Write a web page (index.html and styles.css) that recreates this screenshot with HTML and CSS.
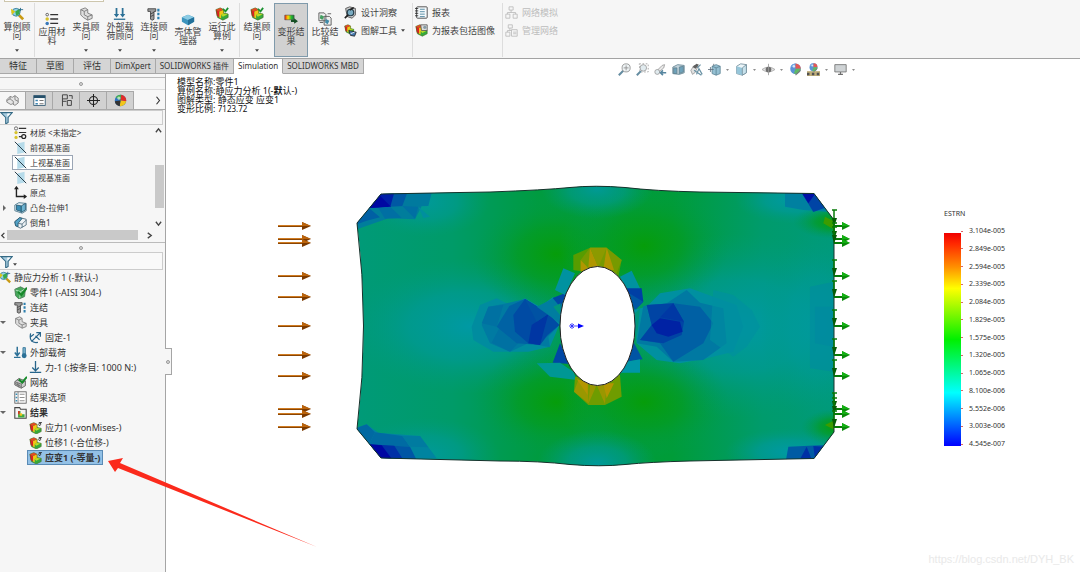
FILE: index.html
```html
<!DOCTYPE html>
<html lang="zh-CN">
<head>
<meta charset="utf-8">
<title>SOLIDWORKS Simulation</title>
<link rel="stylesheet" href="styles.css">
</head>
<body>
<svg class="defs" aria-hidden="true">
  <defs>
    <linearGradient id="rainbow" x1="0" x2="1" y1="0" y2="0"><stop offset="0" stop-color="#e21"/><stop offset=".35" stop-color="#fd0"/><stop offset=".7" stop-color="#2b3"/><stop offset="1" stop-color="#1a7a30"/></linearGradient>
    <symbol id="i-study" viewBox="0 0 16 16"><path d="M9 8l6 6" stroke="#c99a13" stroke-width="3"/><circle cx="7" cy="6" r="4.500" fill="#8fd0e8" stroke="#3a7e99"/><path d="M1 2l5 3-4 4z" fill="#d9c51a"/><path d="M6 5l5-3v6l-4 2z" fill="#37a949"/><path d="M12 1v4M10 3h5" stroke="#276a8c"/></symbol>
    <symbol id="i-list" viewBox="0 0 16 16"><circle cx="2.500" cy="3" r="1.500" fill="none" stroke="#555"/><circle cx="2.500" cy="8" r="2" fill="#d6c22c"/><circle cx="2.500" cy="13" r="2" fill="#3878b8"/><path d="M6 3h9M6 8h9M6 13h9" stroke="#333" stroke-width="1.500"/></symbol>
    <symbol id="i-fix" viewBox="0 0 16 16"><path d="M2 3l5-2 3 2v4l5 2v4l-5 2-5-3-3-3z" fill="#dedede" stroke="#777"/><path d="M2 3l4 2 4-2M6 5v4l4 2 5-2M10 11v4" fill="none" stroke="#777"/></symbol>
    <symbol id="i-load" viewBox="0 0 16 16"><path d="M4 1v8M11 1v8" stroke="#2c7096" stroke-width="2"/><path d="M1 8h6l-3 4zM8 8h6l-3 4z" fill="#2c7096"/><path d="M1 14h13" stroke="#2c7096" stroke-width="1.500"/></symbol>
    <symbol id="i-therm" viewBox="0 0 16 16"><path d="M4 1v10M1 8l3 4 3-4" fill="none" stroke="#2c7096" stroke-width="1.800"/><path d="M0 14h8" stroke="#2c7096" stroke-width="1.500"/><path d="M11 2h3v8h-3z" fill="#7fb4ce" stroke="#2c7096"/><circle cx="12.500" cy="12" r="3" fill="#2c7096"/></symbol>
    <symbol id="i-bolt" viewBox="0 0 16 16"><path d="M1 2h9v3H8v9l-2 1-2-1V5H1z" fill="#9c9c9c" stroke="#444"/><path d="M4 8l4-2M4 11l4-2" stroke="#444"/><path d="M13 2v12" stroke="#2c7fae" stroke-width="2.500" stroke-dasharray="3 1.500"/></symbol>
    <symbol id="i-shell" viewBox="0 0 16 16"><path d="M1 6l7-3 7 3v5l-7 4-7-4z" fill="#3c94bd"/><path d="M1 6l7-3 7 3-7 3z" fill="#8bcbe4"/><path d="M8 9v6l7-4V6z" fill="#23719a"/></symbol>
    <symbol id="i-res" viewBox="0 0 16 16"><path d="M1 3l5-2 4 2v4l5 1v4l-6 3-6-3z" fill="#36a93c"/><path d="M1 3l4 2v7l-3-2z" fill="#d22"/><path d="M5 5l5-2v4l-3 2v4l-2-1z" fill="#f6c414"/><path d="M7 9l3-2 5 1-6 3z" fill="#b7dc28"/><path d="M1 3l5-2 4 2v4l5 1v4l-6 3-6-3z" fill="none" stroke="#3f6b20" stroke-width=".7"/><path d="M6 1l4 2-5 2-4-2z" fill="#e54a22"/></symbol>
    <symbol id="i-run" viewBox="0 0 16 16"><use href="#i-res"/><path d="M9 2l3 3 3-4" fill="none" stroke="#1a9131" stroke-width="2"/></symbol>
    <symbol id="i-plot" viewBox="0 0 16 16"><use href="#i-res" y="1"/><path d="M12 2h4M13 2q-2 3 0 4 2-1 1-4" fill="none" stroke="#222"/></symbol>
    <symbol id="i-deform" viewBox="0 0 18 12"><path d="M1 1h12v6H1z" fill="url(#rainbow)" stroke="#444" stroke-width=".7"/><path d="M9 7h4V5l5 4-5 3v-2H9z" fill="#174f25"/></symbol>
    <symbol id="i-compare" viewBox="0 0 16 16"><path d="M1 1h6l2 2v7H1zM7 5h6l2 2v8H7z" fill="#eee" stroke="#555"/><path d="M3 3l4 2-2 4-3-2z" fill="#439e60"/><path d="M9 8l4 2-2 4-3-2z" fill="#418ba8"/><path d="M2 12h4M11 2h4" stroke="#555"/></symbol>
    <symbol id="i-insight" viewBox="0 0 16 16"><path d="M2 3l5-2 7 2v8l-4 4-6-2z" fill="#ccc" stroke="#444"/><circle cx="8" cy="8" r="4" fill="#79abc1" stroke="#263f4c" stroke-width="1.500"/><path d="M5 11l-4 4M7 5l5-3" stroke="#222" stroke-width="2"/></symbol>
    <symbol id="i-tools" viewBox="0 0 16 16"><use href="#i-res" width="13" height="13"/><path d="M6 8l9 2-2 5-5-1z" fill="#467ab0" stroke="#222"/><path d="M8 12l5-2" stroke="#fff"/></symbol>
    <symbol id="i-report" viewBox="0 0 16 16"><rect x="2" y="1" width="13" height="14" rx="1" fill="#f5f9fb" stroke="#333"/><path d="M6 4h6M6 7h6M6 10h6M6 13h6" stroke="#3b7a96"/><path d="M0 3h4M0 6h4M0 9h4M0 12h4" stroke="#222"/></symbol>
    <symbol id="i-include" viewBox="0 0 16 16"><use href="#i-res"/><path d="M7 1h8v7H8z" fill="#ddd" stroke="#555"/><circle cx="12" cy="4" r="2" fill="#849ba5"/></symbol>
    <symbol id="i-net" viewBox="0 0 16 16"><path d="M5 1h5v4H5zM1 10h5v5H1zM10 10h5v5h-5zM7.500 5v3M3 10V8h10v2" fill="none" stroke="#b9b9b9"/></symbol>
    <symbol id="i-net2" viewBox="0 0 16 16"><path d="M4 1h5v4H4zM1 10h5v5H1zM8 7h7v8H8zM6 5v3M3 10V8h5M10 10h4M10 12h4" fill="none" stroke="#b9b9b9"/></symbol>
    <symbol id="i-part" viewBox="0 0 16 16"><path d="M1 7l4-4 3 1 3-2 4 3v6l-4 3-3-2-2 1-5-3z" fill="#e5e5e5" stroke="#777"/><path d="M5 3v3l4 3v4M11 2v5l4 2M5 6L1 8" fill="none" stroke="#777"/></symbol>
    <symbol id="i-props" viewBox="0 0 16 16"><rect x="1" y="2" width="14" height="12" fill="#fff" stroke="#26506a"/><path d="M1 3.500h14" stroke="#26506a" stroke-width="3"/><path d="M3 7h3v2H3zM3 11h3v2H3z" fill="#3f86b3"/><path d="M8 8h5M8 12h5" stroke="#555"/></symbol>
    <symbol id="i-config" viewBox="0 0 16 16"><path d="M3 15V1h6v5H3M3 9h5M9 8h5v6H9zM11 2h4v4" fill="none" stroke="#444" stroke-width="1.200"/></symbol>
    <symbol id="i-target" viewBox="0 0 16 16"><circle cx="8" cy="8" r="5" fill="none" stroke="#222" stroke-width="1.300"/><path d="M8 0v16M0 8h16" stroke="#222" stroke-width="1.300"/></symbol>
    <symbol id="i-ball" viewBox="0 0 16 16"><circle cx="8" cy="8" r="7" fill="#2f73c0"/><path d="M8 8L2 4a7 7 0 0 1 7-3z" fill="#42af4e"/><path d="M8 8l1-7a7 7 0 0 1 6 8z" fill="#e02c29"/><path d="M8 8l7 1a7 7 0 0 1-8 6z" fill="#f3c51a"/><path d="M8 8l-1 7a7 7 0 0 1-6-6z" fill="#333"/><circle cx="6" cy="5" r="2" fill="#fff" opacity=".6"/></symbol>
    <symbol id="i-look" viewBox="0 0 16 16"><circle cx="8" cy="7" r="6.500" fill="#3f7fd0"/><path d="M8 7L2 4a6.500 6.500 0 0 1 6-3.500z" fill="#5b9ae0"/><path d="M8 7V.5A6.500 6.500 0 0 1 14.500 7z" fill="#df3c38"/><path d="M8 7h6.500A6.500 6.500 0 0 1 6 13z" fill="#44ad4b"/><circle cx="6" cy="4" r="1.500" fill="#fff" opacity=".7"/><path d="M8 15l6-6" stroke="#666" stroke-width="1.500"/></symbol>
    <symbol id="i-filter" viewBox="0 0 16 16"><path d="M1 2h14L10 8v6l-3 2V8z" fill="#a8cde0" stroke="#356a85" stroke-width="1.300"/><path d="M9 3h4L9 7z" fill="#fff"/></symbol>
    <symbol id="i-material" viewBox="0 0 16 16"><circle cx="2.500" cy="3" r="2" fill="none" stroke="#555"/><circle cx="2.500" cy="8" r="2" fill="#d6c22c"/><circle cx="2.500" cy="14" r="2" fill="#d6c22c"/><path d="M6 3h9M6 8h9M6 13h4" stroke="#333" stroke-width="1.500"/><circle cx="12" cy="13" r="2.500" fill="none" stroke="#222" stroke-width="1.500"/></symbol>
    <symbol id="i-plane" viewBox="0 0 16 16"><path d="M4 3l9-2v13l-9 2z" fill="#b6dbea"/><path d="M1 1l14 14" stroke="#263b47" stroke-width="1.200"/></symbol>
    <symbol id="i-origin" viewBox="0 0 16 16"><path d="M3 1v12h12" fill="none" stroke="#222" stroke-width="1.700"/><path d="M0 4l3-4 3 4zM12 10l4 3-4 3z" fill="#222"/></symbol>
    <symbol id="i-boss" viewBox="0 0 16 16"><path d="M1 5l5-3 9 1v9l-5 3-9-3z" fill="#e0ebf0" stroke="#417086"/><path d="M3 5l6 1v7l-6-2z" fill="#378cb4" stroke="#24566e"/><path d="M9 6l5-3v8l-5 3z" fill="#6db3d1" stroke="#24566e"/></symbol>
    <symbol id="i-chamfer" viewBox="0 0 16 16"><path d="M1 7l6-5 8 2v7l-7 4-6-3z" fill="#edf2f5" stroke="#456375"/><path d="M1 7l6-5 3 1-5 6v4l-3-1z" fill="#54a2c7" stroke="#24566e"/><path d="M5 9l5 1 5-5M10 10v4" fill="none" stroke="#456375"/></symbol>
    <symbol id="i-partok" viewBox="0 0 16 16"><path d="M1 4l7-3 6 3-1 9-7 3-4-4z" fill="#47a75b" stroke="#437753"/><path d="M2 5l6 2 5-3M8 7l-1 8" fill="none" stroke="#c9ebd0"/><path d="M5 7l4 4 7-9" fill="none" stroke="#15882a" stroke-width="2.500"/></symbol>
    <symbol id="i-mesh" viewBox="0 0 16 16"><path d="M1 7l5-4 8 3v6l-5 3-8-4z" fill="#ccc" stroke="#555"/><path d="M1 7l8 3 5-4M9 10v5M4 5l8 3M4 8v4M6 9v5M1 9l8 4" fill="none" stroke="#666"/><path d="M6 4l4 4 6-7" fill="none" stroke="#168b2b" stroke-width="2.500"/></symbol>
    <symbol id="i-fixed" viewBox="0 0 16 16"><path d="M2 3c-2 9 2 12 9 11M3 13L14 2M9 2h5v5M2 7l4-3M8 6l5 5" fill="none" stroke="#27658b" stroke-width="1.500"/></symbol>
    <symbol id="i-force" viewBox="0 0 16 16"><path d="M8 0v11M4 8l4 4 4-4M1 14h14" fill="none" stroke="#27658b" stroke-width="1.600"/></symbol>
    <symbol id="i-options" viewBox="0 0 16 16"><rect x="1" y="1" width="14" height="14" fill="#fff" stroke="#555"/><path d="M5 1v14M7 4h6M7 8h6M7 12h6" stroke="#777"/><path d="M2 3h2v2H2zM2 7h2v2H2zM2 11h2v2H2z" fill="#378cb4"/></symbol>
    <symbol id="i-folder" viewBox="0 0 16 16"><path d="M1 2h6l1 2h7v11H1z" fill="#f4f4f4" stroke="#444" stroke-width="1.300"/><path d="M5 6h3v4h5v4H5z" fill="#3fa940"/><path d="M5 6h2v4H5z" fill="#dc3322"/><path d="M7 9h3v3H7z" fill="#f3c51a"/></symbol>
    <symbol id="i-zoom" viewBox="0 0 16 16"><path d="M7 9l-6 6" stroke="#497991" stroke-width="2.500"/><circle cx="10" cy="6" r="5" fill="#eaf0f2" stroke="#777"/><path d="M10 3v6M7 6h6" stroke="#777"/></symbol>
    <symbol id="i-zoomarea" viewBox="0 0 16 16"><path d="M4 1h11v10H5z" fill="none" stroke="#888" stroke-dasharray="2 2"/><path d="M6 10l-5 5" stroke="#497991" stroke-width="2.500"/><circle cx="9" cy="6" r="4" fill="#dce8ed" stroke="#888"/></symbol>
    <symbol id="i-prev" viewBox="0 0 16 16"><path d="M2 11l8-8 3-1-1 4-7 6z" fill="#e4e4e4" stroke="#888"/><circle cx="4" cy="11" r="3" fill="#dce8ed" stroke="#888"/><path d="M15 12H8M11 9l-3 3 3 3" fill="none" stroke="#3a7190" stroke-width="2"/></symbol>
    <symbol id="i-section" viewBox="0 0 16 16"><path d="M1 5l6-3 8 1v9l-6 2-8-1z" fill="#b8ccd5" stroke="#456b7c"/><path d="M2 6h4v7H2zM9 5l5-1v7l-5 2z" fill="#5592ae" stroke="#456b7c"/></symbol>
    <symbol id="i-annot" viewBox="0 0 16 16"><path d="M1 9l4-6 5 1-4 8-3 2z" fill="#ddd" stroke="#888"/><path d="M3 5l5-4 3 1-4 5z" fill="#444"/><path d="M8 14l3-7 4 7M5 9l9 6M9 6l4-4" fill="none" stroke="#4f7f95" stroke-width="1.500"/></symbol>
    <symbol id="i-view" viewBox="0 0 16 16"><path d="M5 4l5-2 5 2v9l-5 2-5-2z" fill="#82b5cb" stroke="#416f84"/><path d="M5 4l5 2 5-2M10 6v9" fill="none" stroke="#416f84"/><path d="M0 8h7M3 5v6M7 1v2" stroke="#456"/></symbol>
    <symbol id="i-cube" viewBox="0 0 16 16"><path d="M2 4l5-3 7 1v10l-5 3-7-2z" fill="#e9f4f8" stroke="#587887"/><path d="M2 4l7 2v9l-7-2z" fill="#84bdd4"/><path d="M9 6l5-4v10l-5 3z" fill="#bfdde9" stroke="#587887"/></symbol>
    <symbol id="i-eye" viewBox="0 0 16 16"><path d="M0 8q8-6 16 0-8 6-16 0z" fill="#ddd" stroke="#999"/><circle cx="8" cy="8" r="3.500" fill="#555"/><path d="M8 1v14" stroke="#888"/></symbol>
    <symbol id="i-scene" viewBox="0 0 16 16"><path d="M0 10h16v6H0z" fill="#b5a163"/><path d="M0 12h3v3H0zM6 12h3v3H6zM12 12h3v3h-3z" fill="#333"/><use href="#i-look" x="2" width="12" height="12"/></symbol>
    <symbol id="i-screen" viewBox="0 0 16 16"><path d="M1 2h14v9H1z" fill="#c7ccce" stroke="#555"/><path d="M8 11v3M5 14h6" stroke="#555" stroke-width="1.500"/></symbol>
    <symbol id="i-drop" viewBox="0 0 6 4"><path d="M0 0h6L3 4z" fill="#444"/></symbol>
  </defs>
</svg>

<div class="app">
  <header class="ribbon">
    <div class="search-edge"></div>
    <div class="commands">
      <div class="group">
        <button class="cmd"><svg><use href="#i-study"/></svg><span>算例顾问</span><svg class="drop"><use href="#i-drop"/></svg></button>
      </div>
      <div class="group">
        <button class="cmd plain"><svg><use href="#i-list"/></svg><span>应用材料</span></button>
        <button class="cmd"><svg><use href="#i-fix"/></svg><span>夹具顾问</span><svg class="drop"><use href="#i-drop"/></svg></button>
        <button class="cmd"><svg><use href="#i-load"/></svg><span>外部载荷顾问</span><svg class="drop"><use href="#i-drop"/></svg></button>
        <button class="cmd"><svg><use href="#i-bolt"/></svg><span>连接顾问</span><svg class="drop"><use href="#i-drop"/></svg></button>
        <button class="cmd plain"><svg><use href="#i-shell"/></svg><span>壳体管理器</span></button>
        <button class="cmd"><svg><use href="#i-run"/></svg><span>运行此算例</span><svg class="drop"><use href="#i-drop"/></svg></button>
      </div>
      <div class="group last">
        <button class="cmd"><svg><use href="#i-run"/></svg><span>结果顾问</span><svg class="drop"><use href="#i-drop"/></svg></button>
        <button class="cmd plain pressed"><svg><use href="#i-deform"/></svg><span>变形结果</span></button>
        <button class="cmd plain"><svg><use href="#i-compare"/></svg><span>比较结果</span></button>
      </div>
      <div class="stack">
        <button class="row"><svg><use href="#i-insight"/></svg><span>设计洞察</span></button>
        <button class="row"><svg><use href="#i-tools"/></svg><span>图解工具</span><svg class="drop"><use href="#i-drop"/></svg></button>
      </div>
      <div class="stack">
        <button class="row"><svg><use href="#i-report"/></svg><span>报表</span></button>
        <button class="row"><svg><use href="#i-include"/></svg><span>为报表包括图像</span></button>
      </div>
      <div class="stack">
        <button class="row" disabled><svg><use href="#i-net"/></svg><span>网络模拟</span></button>
        <button class="row" disabled><svg><use href="#i-net2"/></svg><span>管理网络</span></button>
      </div>
    </div>
  </header>

  <div class="strip">
    <nav class="tabs">
      <button class="han">特征</button><button class="han">草图</button><button class="han">评估</button><button>DimXpert</button><button>SOLIDWORKS 插件</button><button class="active">Simulation</button><button>SOLIDWORKS MBD</button>
    </nav>
    <div class="hud">
      <button><svg><use href="#i-zoom"/></svg></button>
      <button><svg><use href="#i-zoomarea"/></svg></button>
      <button><svg><use href="#i-prev"/></svg></button>
      <button><svg><use href="#i-section"/></svg></button>
      <button><svg><use href="#i-annot"/></svg></button>
      <button><svg><use href="#i-view"/></svg><svg class="drop"><use href="#i-drop"/></svg></button>
      <button><svg><use href="#i-cube"/></svg><svg class="drop"><use href="#i-drop"/></svg></button>
      <button><svg><use href="#i-eye"/></svg><svg class="drop"><use href="#i-drop"/></svg></button>
      <button><svg><use href="#i-look"/></svg></button>
      <button><svg><use href="#i-scene"/></svg><svg class="drop"><use href="#i-drop"/></svg></button>
      <button><svg><use href="#i-screen"/></svg><svg class="drop"><use href="#i-drop"/></svg></button>
    </div>
  </div>

  <div class="work">
    <aside class="panel">
      <div class="grip top"><i></i></div>
      <div class="managers">
        <button class="active"><svg><use href="#i-part"/></svg></button>
        <button><svg><use href="#i-props"/></svg></button>
        <button><svg><use href="#i-config"/></svg></button>
        <button><svg><use href="#i-target"/></svg></button>
        <button><svg><use href="#i-ball"/></svg></button>
        <button class="more"><svg viewBox="0 0 8 12"><path d="M2 1l4 5-4 5" fill="none" stroke="#333" stroke-width="1.500"/></svg></button>
      </div>
      <label class="filter"><svg><use href="#i-filter"/></svg><input type="text" aria-label="过滤"></label>
      <div class="features">
        <ul class="tree small">
          <li><svg><use href="#i-material"/></svg>材质 &lt;未指定&gt;</li>
          <li><svg><use href="#i-plane"/></svg>前视基准面</li>
          <li class="outlined"><svg><use href="#i-plane"/></svg>上视基准面</li>
          <li><svg><use href="#i-plane"/></svg>右视基准面</li>
          <li><svg><use href="#i-origin"/></svg>原点</li>
          <li class="closed"><svg><use href="#i-boss"/></svg>凸台-拉伸1</li>
          <li><svg><use href="#i-chamfer"/></svg>倒角1</li>
        </ul>
        <div class="vbar">
          <svg viewBox="0 0 8 8"><path d="M1 6l3-4 3 4" fill="none" stroke="#444" stroke-width="1.500"/></svg>
          <div class="thumb"></div>
          <svg viewBox="0 0 8 8"><path d="M1 2l3 4 3-4" fill="none" stroke="#444" stroke-width="1.500"/></svg>
        </div>
      </div>
      <div class="hbar">
        <svg viewBox="0 0 8 8"><path d="M5 1L2 4l3 3" fill="none" stroke="#444" stroke-width="1.500"/></svg>
        <div class="thumb"></div>
        <svg viewBox="0 0 8 8"><path d="M2 1l4 3-4 3" fill="none" stroke="#444" stroke-width="1.500"/></svg>
      </div>
      <div class="grip"><i></i></div>
      <label class="filter boxed"><svg><use href="#i-filter"/></svg><svg class="drop"><use href="#i-drop"/></svg><input type="text" aria-label="过滤算例"></label>
      <ul class="tree study">
        <li class="root"><svg><use href="#i-study"/></svg>静应力分析 1 (-默认-)</li>
        <li><svg><use href="#i-partok"/></svg>零件1 (-AISI 304-)</li>
        <li><svg><use href="#i-bolt"/></svg>连结</li>
        <li class="open"><svg><use href="#i-fix"/></svg>夹具</li>
        <li class="deep"><svg><use href="#i-fixed"/></svg>固定-1</li>
        <li class="open"><svg><use href="#i-therm"/></svg>外部载荷</li>
        <li class="deep"><svg><use href="#i-force"/></svg>力-1 (:按条目: 1000 N:)</li>
        <li><svg><use href="#i-mesh"/></svg>网格</li>
        <li><svg><use href="#i-options"/></svg>结果选项</li>
        <li class="open bold"><svg><use href="#i-folder"/></svg>结果</li>
        <li class="deep"><svg><use href="#i-plot"/></svg>应力1 (-vonMises-)</li>
        <li class="deep"><svg><use href="#i-plot"/></svg>位移1 (-合位移-)</li>
        <li class="deep bold selected"><svg><use href="#i-plot"/></svg>应变1 (-等量-)</li>
      </ul>
      <button class="collapse"><i></i></button>
    </aside>

    <main class="viewport">
      <p class="notes">模型名称:零件1<br>算例名称:静应力分析 1(-<b>默</b>认-)<br>图解类型: 静态应变 应变1<br>变形比例: <small>7123.72</small></p>
      <div class="plot">
        <svg class="scene" viewBox="166 120 768 440">
          <defs>
            <clipPath id="plate"><path d="M381 194L460 192.500 490 192Q545 190 570 187.500T625 187.500Q655 191 700 192L814 193.500 834 220V432L814 458.500 690 461Q650 462 625 464.500T570 464.500Q540 461 500 461L381 458 357 429Q370 326 357 223z"/></clipPath>
            <radialGradient id="green"><stop offset="0" stop-color="#069d0a"/><stop offset=".45" stop-color="#049c20" stop-opacity=".7"/><stop offset="1" stop-color="#009b50" stop-opacity="0"/></radialGradient>
            <radialGradient id="cyan"><stop offset="0" stop-color="#0099a4"/><stop offset=".5" stop-color="#00999c" stop-opacity=".65"/><stop offset="1" stop-color="#009a80" stop-opacity="0"/></radialGradient>
            <linearGradient id="base" x1="357" x2="834" y1="0" y2="0" gradientUnits="userSpaceOnUse"><stop offset="0" stop-color="#009a78"/><stop offset=".2" stop-color="#009b68"/><stop offset=".38" stop-color="#009b40"/><stop offset=".66" stop-color="#009c38"/><stop offset=".85" stop-color="#009b6c"/><stop offset="1" stop-color="#009a78"/></linearGradient>
            <g id="pull"><path d="M0-1h25v2H0z" fill="#8a4504"/><path d="M0-1h25v1H0z" fill="#d07c22"/><path d="M24-4l9 4-9 4z" fill="#7c3a00"/><path d="M24-4l9 4h-9z" fill="#bb640c"/></g>
            <g id="hold"><path d="M0 0h11" stroke="#087b08" stroke-width="2"/><path d="M8-4l8 4-8 4z" fill="#0a8a0a"/><path d="M8-4l8 4H8z" fill="#12b012"/><path d="M-2-16h5M0-16V-5" stroke="#087b08" stroke-width="1.500"/><path d="M-2-8h5L0 1z" fill="#075c07"/></g>
          </defs>
          <g clip-path="url(#plate)">
            <path d="M350 180h490v290H350z" fill="url(#base)"/>
            <ellipse cx="470" cy="326" rx="125" ry="68" fill="url(#cyan)"/>
            <ellipse cx="735" cy="326" rx="150" ry="92" fill="url(#cyan)"/>
            <ellipse cx="820" cy="326" rx="60" ry="100" fill="url(#cyan)" opacity=".7"/>
            <ellipse cx="425" cy="202" rx="65" ry="35" fill="url(#cyan)" opacity=".8"/>
            <ellipse cx="425" cy="455" rx="75" ry="38" fill="url(#cyan)" opacity=".8"/>
            <ellipse cx="795" cy="200" rx="60" ry="24" fill="url(#cyan)"/>
            <ellipse cx="790" cy="452" rx="65" ry="24" fill="url(#cyan)"/>
            <ellipse cx="556" cy="254" rx="85" ry="60" fill="url(#green)"/>
            <ellipse cx="644" cy="246" rx="85" ry="64" fill="url(#green)"/>
            <ellipse cx="556" cy="402" rx="85" ry="56" fill="url(#green)"/>
            <ellipse cx="644" cy="402" rx="85" ry="56" fill="url(#green)"/>
            <ellipse cx="597" cy="189" rx="56" ry="30" fill="url(#cyan)" opacity=".85"/>
            <ellipse cx="597" cy="464" rx="60" ry="34" fill="url(#cyan)" opacity=".9"/>
            <ellipse cx="835" cy="222" rx="42" ry="17" fill="url(#green)"/>
            <ellipse cx="835" cy="427" rx="34" ry="18" fill="url(#green)"/>

            <!-- upper left and lower left corners -->
            <g transform="translate(265 180) scale(.33333)">
              <path d="M0 0H510L450 118 370 115 270 150z" fill="#007d9c"/>
              <path d="M345 0H510L490 78 390 80 340 85z" fill="#007a9e"/>
              <path d="M330 30H430L412 78 312 84z" fill="#0058a4"/>
              <path d="M330 30H390L376 80 312 84z" fill="#0020a8"/>
              <path d="M312 84L340 42 378 80z" fill="#0008a2"/>
              <path d="M312 84L345 112 305 122 270 135z" fill="#0060a4"/>
              <path d="M340 84L376 80 410 113 360 116zM412 78L460 80 450 116z" fill="#006fa3"/>
              <path d="M460 80L495 110 475 114z" fill="#008f9e"/>
              <path d="M272 745L305 733 340 758 465 768 515 835 340 840z" fill="#0084a0"/>
              <path d="M272 745L305 733 330 757 312 793z" fill="#0069a2"/>
              <path d="M312 793L330 757 412 768 435 800z" fill="#006ba3"/>
              <path d="M312 793L435 800 455 840H340z" fill="#0056a5"/>
              <path d="M312 793L388 797 415 840H340z" fill="#0030a7"/>
              <path d="M312 793L350 796 383 840H340z" fill="#0006a2"/>
              <path d="M412 768L465 768 490 802 435 800z" fill="#007ba0"/>
            </g>
            <!-- around the hole -->
            <g transform="translate(460 180) scale(.33333)">
              <path d="M35 440L60 375 110 355 150 375 195 355 240 380 280 350 300 430 270 500 205 515 100 515 40 480z" fill="#008c9f"/>
              <path d="M65 435L85 380 130 372 195 357 265 400 298 435 265 470 270 502 205 490 150 515 90 490z" fill="#007aa2"/>
              <path d="M85 380L130 375 110 440 65 430zM95 488L120 440 175 490 150 515z" fill="#0071a2"/>
              <path d="M110 440L148 378 195 357 265 400 298 435 260 470 240 495 170 490z" fill="#0062a4"/>
              <path d="M160 405L195 357 265 402 298 435 262 465 240 495 205 490 165 455z" fill="#004ba4"/>
              <path d="M215 435L265 402 240 495 205 490z" fill="#0036a3"/>
              <path d="M195 357L265 402 230 425z" fill="#0052a3"/>
              <path d="M230 380L290 350 330 380 300 430z" fill="#007da0"/>
              <path d="M278 354L325 335 300 380zM300 490L330 552 278 548z" fill="#0047a4"/>
              <path d="M285 330L310 265 345 280 315 345z" fill="#0092a0"/>
              <path d="M230 550L300 548 340 575 350 600 270 590z" fill="#009794"/>
              <path d="M495 320L545 325 550 365 525 390z" fill="#003fa5"/><path d="M525 390L500 335 550 365z" fill="#0058a5"/>
              <path d="M480 290L515 272 540 325 500 325z" fill="#0092a0"/>
              <path d="M520 485L548 538 500 545z" fill="#0054a4"/><path d="M500 545L540 538V578L475 578z" fill="#0096a8"/>
              <path d="M520 390L560 380 600 340 690 325 760 350 830 375 850 440 820 515 740 535 660 550 590 540 530 490z" fill="#0090a0"/>
              <path d="M550 378L620 370 680 330 720 368 790 385 800 490 730 540 640 545 590 500 530 490z" fill="#0079a2"/>
              <path d="M560 375L640 370 720 380 760 430 730 490 640 545 600 490 540 480 575 435z" fill="#0060a4"/>
              <path d="M560 375L640 370 672 425 665 465 610 490 540 480 575 435z" fill="#0044a4"/>
              <path d="M575 435L600 415 660 425 668 455 625 470 590 460z" fill="#0022a4"/>
              <path d="M640 370L672 425 600 412z" fill="#0038a4"/>
              <path d="M340 270V225L390 203H440L485 240 475 290z" fill="#579c00"/>
              <path d="M362 270V240L390 203H440L485 240 470 280z" fill="#779a00"/>
              <path d="M390 203L415 262H385zM440 203L462 270H430zM362 240L385 265 362 275z" fill="#b09600"/>
              <path d="M390 203H440L415 262z" fill="#8c9a00"/>
              <path d="M345 590L480 585 485 650 435 675H385L342 635z" fill="#6f9c00"/>
              <path d="M355 600L385 605V670L342 635zM390 615H410L385 672zM410 615L435 672 440 610z" fill="#9a9700"/>
              <path d="M350 597L383 645V608zM430 610H462L440 655z" fill="#b49500"/>
              <path d="M300 405L280 380 302 370zM525 400L540 385 530 480z" fill="#00967c"/>
            </g>
            <!-- right side -->
            <g transform="translate(680 180) scale(.33333)">
              <path d="M100 330L160 345 215 390 240 440 200 500 160 530 90 480z" fill="#008fa0" opacity=".6"/>
              <path d="M315 30H420L440 95 370 90 315 80z" fill="#0080a0"/>
              <path d="M360 30H410L440 82 400 96z" fill="#0044a5"/><path d="M360 30L405 42 385 70z" fill="#0010a5"/>
              <path d="M325 800L435 795 405 840H318z" fill="#005ba4"/><path d="M380 800L395 838H360zM400 798L430 800 405 838z" fill="#0030a5"/>
              <path d="M390 320L460 305V575L390 565z" fill="#008aa0" opacity=".55"/>
              <path d="M405 380H460V500L405 490z" fill="#0088a0" opacity=".6"/>
              <path d="M435 110L465 125V150L430 130zM435 735L465 720V750z" fill="#3c9c00"/>
            </g>
          </g>
          <path d="M381 194L460 192.500 490 192Q545 190 570 187.500T625 187.500Q655 191 700 192L814 193.500 834 220V432L814 458.500 690 461Q650 462 625 464.500T570 464.500Q540 461 500 461L381 458 357 429Q370 326 357 223z" fill="none" stroke="#16322c"/>
          <ellipse cx="597.500" cy="326" rx="37.500" ry="59.500" fill="#fff" stroke="#222"/>
          <path d="M569 326h11M572 323v6M570 324l4 4M570 328l4-4" stroke="#22f" stroke-width=".8"/><path d="M578 323.500l6 2.500-6 2.500z" fill="#00f"/>
          <g>
            <use href="#pull" x="278" y="226"/><use href="#pull" x="278" y="239"/><use href="#pull" x="278" y="243"/><use href="#pull" x="278" y="276"/><use href="#pull" x="278" y="297"/><use href="#pull" x="278" y="326"/><use href="#pull" x="278" y="355"/><use href="#pull" x="278" y="376"/><use href="#pull" x="278" y="409"/><use href="#pull" x="278" y="414"/><use href="#pull" x="278" y="427"/>
            <use href="#hold" x="834" y="226"/><use href="#hold" x="834" y="239"/><use href="#hold" x="834" y="243"/><use href="#hold" x="834" y="276"/><use href="#hold" x="834" y="297"/><use href="#hold" x="834" y="326"/><use href="#hold" x="834" y="355"/><use href="#hold" x="834" y="376"/><use href="#hold" x="834" y="409"/><use href="#hold" x="834" y="414"/><use href="#hold" x="834" y="427"/>
          </g>
        </svg>
        <section class="legend">
          <h2>ESTRN</h2>
          <div class="scale">
            <div class="bar"></div>
            <ol>
              <li>3.104e-005</li><li>2.849e-005</li><li>2.594e-005</li><li>2.339e-005</li><li>2.084e-005</li><li>1.829e-005</li><li>1.575e-005</li><li>1.320e-005</li><li>1.065e-005</li><li>8.100e-006</li><li>5.552e-006</li><li>3.003e-006</li><li>4.545e-007</li>
            </ol>
          </div>
        </section>
      </div>
      <span class="watermark">https://blog.csdn.net/DYH_BK</span>
    </main>
  </div>
  <svg class="pointer" viewBox="0 0 212 90" aria-hidden="true"><path d="M2 3L17 0 14 5 211 89 12 10 9 14z" fill="#fb2a1c"/></svg>
</div>
</body>
</html>
```

FILE: styles.css
```css
* { box-sizing: border-box; }
body {
  margin: 0;
  background: #fff;
  color: #333;
  font: 9px/15px "Noto Sans", "Noto Sans CJK SC", sans-serif;
}
button {
  margin: 0;
  padding: 0;
  border: 0;
  background: none;
  color: inherit;
  font: inherit;
}
ul, ol, p, h2 { margin: 0; padding: 0; list-style: none; }
svg { display: block; flex: none; width: 13px; height: 13px; }
.drop { width: 4px; height: 3px; }
.defs { position: absolute; width: 0; height: 0; }

.app {
  position: relative;
  display: flex;
  flex-direction: column;
  min-height: 100vh;
  overflow: hidden;
}

/* ribbon */
.ribbon { background: #f6f6f6; border-bottom: 1px solid #a3a3a3; }
.search-edge { width: 100px; height: 2px; margin-left: 4px; background: #fff; border: 1px solid #cdc6ad; border-top: 0; }
.commands { display: flex; height: 56px; padding: 1px 0; color: #444; }
.group { display: flex; border-right: 1px solid #ddd; }
.group.last { border: 0; }
.cmd {
  display: flex;
  flex-direction: column;
  align-items: center;
  width: 34px;
  padding: 4px 3px 0;
  line-height: 9px;
}
.cmd span { height: 18px; margin-bottom: 9px; }
.cmd svg:first-child { margin-bottom: 1px; height: 14px; width: 14px; }
.cmd.plain { padding-top: 9px; }
.cmd.pressed { padding: 8px 2px 0; background: #d1d1d1; border: 1px solid #7f9aab; }
.stack {
  display: flex;
  flex-direction: column;
  padding: 0 7px 0 2px;
  border-right: 1px solid #ddd;
}
.stack:last-child { border: 0; }
.row { display: flex; align-items: center; gap: 4px; height: 18px; }
.row:disabled { color: #bdbdbd; }

/* tab strip and view toolbar */
.strip { display: flex; justify-content: space-between; height: 15px; }
.tabs { display: flex; }
.tabs button {
  min-width: 37px;
  padding: 0 4px;
  background: #d5d5d5;
  border: 1px solid #a8a8a8;
  border-width: 0 1px 1px 0;
  font-size: 8px;
  line-height: 14px;
  white-space: nowrap;
}
.tabs .han { font-size: 9px; }
.tabs .active { background: #fff; border-bottom-color: #fff; }
.hud { display: flex; margin-right: 221px; padding-top: 4px; }
.hud button { display: flex; align-items: center; gap: 5px; height: 13px; padding: 0 3px 0 2px; }
.hud .drop { width: 3px; height: 2px; margin-right: 1px; opacity: .6; }
.hud svg:first-child { opacity: .85; }

/* side panel */
.work { display: flex; flex: 1; }
.panel {
  position: relative;
  flex: none;
  width: 166px;
  background: #f6f6f6;
  border-right: 1px solid #a5a5a5;
}
.grip { display: flex; justify-content: center; align-items: center; height: 10px; margin-top: 1px; padding-right: 4px; border-top: 1px solid #bbb; }
.grip.top { height: 13px; margin: 3px 0 0; border-bottom: 1px solid #ddd; }
i { width: 4px; height: 4px; border: 1px solid #999; border-radius: 50%; background: #ddd; }
.managers { display: flex; height: 19px; margin-top: 1px; border-bottom: 1px solid #aaa; }
.managers button {
  display: flex;
  align-items: center;
  justify-content: center;
  width: 27px;
  background: #d1d1d1;
  border-right: 1px solid #a8a8a8;
  border-top: 1px solid #a8a8a8;
}
.managers .active { width: 26px; background: #f6f6f6; }
.managers .more { margin-left: auto; width: 14px; border: 0; background: none; }
.more svg { width: 6px; height: 9px; }
.filter { display: flex; align-items: center; height: 15px; margin-right: 2px; border: 1px solid #ccc; border-left: 0; }
.filter input { flex: 1; min-width: 0; height: 12px; padding: 0 4px; border: 0; background: none; font: inherit; outline: 0; }
.filter.boxed { height: 18px; background: #f9f9f9; }
.filter.boxed .drop { margin-top: 7px; }
.features { display: flex; justify-content: space-between; height: 104px; overflow: hidden; }
.tree li {
  position: relative;
  display: flex;
  align-items: center;
  gap: 3px;
  width: max-content;
  height: 15px;
  margin-left: 12px;
  padding: 0 2px 0 1px;
  border: 1px solid transparent;
  white-space: nowrap;
}
.tree.small { font-size: 8px; }
.tree .outlined { border-color: #9ba6b5; background: #fff; }
.tree .deep { margin-left: 27px; }
.tree .root { margin-left: -4px; }
.bold { font-weight: 700; }
.tree .selected { background: #93c1e6; border-color: #5a8bb5; }
.closed::before, .open::before {
  content: "";
  position: absolute;
  left: -10px;
  border: 3px solid transparent;
  border-left-color: #666;
  border-right: 0;
}
.open::before { left: -13px; border: 3px solid transparent; border-top-color: #666; border-bottom: 0; }
.vbar { display: flex; flex-direction: column; justify-content: space-between; width: 9px; margin-right: 1px; padding: 2px 0; }
.vbar svg, .hbar svg { width: 7px; height: 7px; }
.vbar .thumb { height: 43px; margin-top: 18px; background: #c9c9c9; }
.hbar { display: flex; align-items: center; height: 12px; margin-right: 12px; }
.hbar .thumb { flex: 1; height: 10px; margin-right: 8px; background: #c9c9c9; }
.collapse {
  position: absolute;
  left: 165px;
  top: 274px;
  display: flex;
  align-items: center;
  justify-content: center;
  width: 7px;
  height: 27px;
  border: 1px solid #a5a5a5;
  border-left: 0;
  background: #f6f6f6;
}

/* graphics area */
.viewport { position: relative; flex: 1; min-width: 0; }
.notes { height: 46px; padding: 3px 0 0 11px; color: #111; line-height: 9px; }
.notes small { font-size: 8px; }
.plot { display: flex; }
.scene { flex: 1; min-width: 0; width: auto; height: auto; }
.legend { flex: none; width: 146px; padding: 87px 0 0 10px; font-size: 7px; line-height: 16px; }
.legend h2 { font-size: 7px; font-weight: 400; line-height: 14px; }
.scale { display: flex; height: 213px; margin-top: 12px; }
.bar { width: 17px; background: linear-gradient(#f00000, #ff2800 5%, #ff9000 16%, #ffff00 26%, #00f000 50%, #00ffff 75%, #0000ff); }
.scale ol { display: flex; flex-direction: column; justify-content: space-between; margin: -10px 0 -6px; }
.scale li { display: flex; align-items: center; gap: 6px; height: 16px; }
.scale li::before { content: ""; width: 2px; height: 1px; background: #d66; }
.watermark {
  position: absolute;
  right: 6px;
  bottom: 5px;
  color: #e9e9e9;
  font: 11px/15px "Liberation Sans", sans-serif;
}

/* callout arrow laid over the panel and the plot */
.pointer { position: absolute; left: 106px; top: 458px; width: 212px; height: 90px; pointer-events: none; }
```
